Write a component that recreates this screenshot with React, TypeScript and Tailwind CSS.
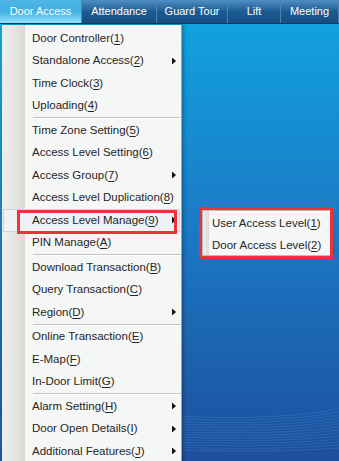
import { ReactNode } from "react";

type Item = { label: string; key: string; sub?: boolean; sepAfter?: boolean; active?: boolean };

const items: Item[] = [
  { label: "Door Controller", key: "1" },
  { label: "Standalone Access", key: "2", sub: true },
  { label: "Time Clock", key: "3" },
  { label: "Uploading", key: "4", sepAfter: true },
  { label: "Time Zone Setting", key: "5" },
  { label: "Access Level Setting", key: "6" },
  { label: "Access Group", key: "7", sub: true },
  { label: "Access Level Duplication", key: "8" },
  { label: "Access Level Manage", key: "9", sub: true, active: true },
  { label: "PIN Manage", key: "A", sepAfter: true },
  { label: "Download Transaction", key: "B" },
  { label: "Query Transaction", key: "C" },
  { label: "Region", key: "D", sub: true, sepAfter: true },
  { label: "Online Transaction", key: "E" },
  { label: "E-Map", key: "F" },
  { label: "In-Door Limit", key: "G", sepAfter: true },
  { label: "Alarm Setting", key: "H", sub: true },
  { label: "Door Open Details", key: "I", sub: true },
  { label: "Additional Features", key: "J", sub: true },
];

const tabs = [
  { name: "Door Access", w: "w-[82px]", on: true },
  { name: "Attendance", w: "w-[75px]" },
  { name: "Guard Tour", w: "w-[71px]" },
  { name: "Lift", w: "w-[53px]" },
  { name: "Meeting", w: "w-[58px]" },
];

function Label({ text, k }: { text: string; k: string }) {
  return (
    <span className="whitespace-nowrap">
      {text}(<span className="underline underline-offset-2">{k}</span>)
    </span>
  );
}

function Arrow() {
  return (
    <svg width="4" height="7" viewBox="0 0 4 7" className="absolute right-[5px] top-1/2 -translate-y-1/2">
      <path d="M0 0 L4 3.5 L0 7 Z" fill="#111" />
    </svg>
  );
}

function Row({ item }: { item: Item }) {
  return (
    <div className="relative h-[22.5px] flex items-center pl-[30px]">
      {item.active && (
        <div className="absolute left-[1px] right-[1px] inset-y-0 bg-[#eef2f6] border border-[#c9d3de]" />
      )}
      <span className="relative">
        <Label text={item.label} k={item.key} />
      </span>
      {item.sub && <Arrow />}
    </div>
  );
}

function Separator() {
  return (
    <div className="h-[2px] ml-[31px]">
      <div className="h-px bg-[#c5c5c5]" />
      <div className="h-px bg-white" />
    </div>
  );
}

function Box({ className, children }: { className: string; children?: ReactNode }) {
  return <div className={"absolute border-[3px] border-[#ee3338] " + className}>{children}</div>;
}

export default function App() {
  return (
    <div
      className="relative w-[339px] h-[461px] overflow-hidden bg-gradient-to-b from-[#0fa6e0] via-[#1a79c4] to-[#1d4f9e] text-[11.5px] text-[#262626]"
      style={{ fontFamily: '"Liberation Sans", Arial, sans-serif' }}
    >
      {/* top tab bar */}
      <div className="flex h-[24px] bg-gradient-to-b from-[#4f8fc4] via-[#1c5c92] to-[#154d82] border-b border-[#0d3c68] text-[11px]">
        {tabs.map((t) => (
          <div
            key={t.name}
            className={
              "shrink-0 flex items-center justify-center text-white border-r border-[#4d82b2] " +
              t.w +
              (t.on ? " bg-gradient-to-b from-[#4fb6e4] via-[#3fb0e4] to-[#8fe2fa]" : "")
            }
          >
            {t.name}
          </div>
        ))}
      </div>

      {/* decorative waves */}
      <svg className="absolute left-0 bottom-0" width="339" height="70" viewBox="0 0 339 70">
        {Array.from({ length: 14 }).map((_, i) => (
          <path
            key={i}
            d={`M0 ${30 + i * 3} C 90 ${10 + i * 3}, 220 ${40 + i * 2}, 339 ${18 + i * 3}`}
            stroke="#5fa6e6"
            strokeOpacity="0.35"
            strokeWidth="0.6"
            fill="none"
          />
        ))}
      </svg>

      {/* dropdown menu */}
      <div className="absolute left-[2px] top-[25px] w-[180px] h-[440px] bg-[#f5f6f6] border-r border-[#9ea3a8] shadow-[2px_0_3px_rgba(0,0,0,0.25)] pt-[2px]">
        <div className="absolute left-0 top-0 bottom-0 w-[23px] bg-gradient-to-r from-[#eeeeeb] via-[#e6e6e2] to-[#d9d9d4]" />
        <div className="relative">
          {items.map((it) => (
            <div key={it.key}>
              <Row item={it} />
              {it.sepAfter && <Separator />}
            </div>
          ))}
        </div>
      </div>

      {/* submenu */}
      <div className="absolute left-[202px] top-[210px] w-[129px] h-[46px] bg-[#f5f6f6] border border-[#b9bcbf] shadow-[1px_1px_3px_rgba(0,0,0,0.3)]">
        <div className="absolute left-0 top-0 bottom-0 w-[6px] bg-gradient-to-r from-[#eeeeeb] to-[#dcdcd7]" />
        <div className="relative pl-[9px] pt-[1px]">
          <div className="h-[22.5px] flex items-center">
            <Label text="User Access Level" k="1" />
          </div>
          <div className="h-[22.5px] flex items-center">
            <Label text="Door Access Level" k="2" />
          </div>
        </div>
      </div>

      {/* annotation boxes */}
      <Box className="left-[17px] top-[210px] w-[160px] h-[24px]" />
      <Box className="left-[199px] top-[207px] w-[134px] h-[52px]" />
    </div>
  );
}
